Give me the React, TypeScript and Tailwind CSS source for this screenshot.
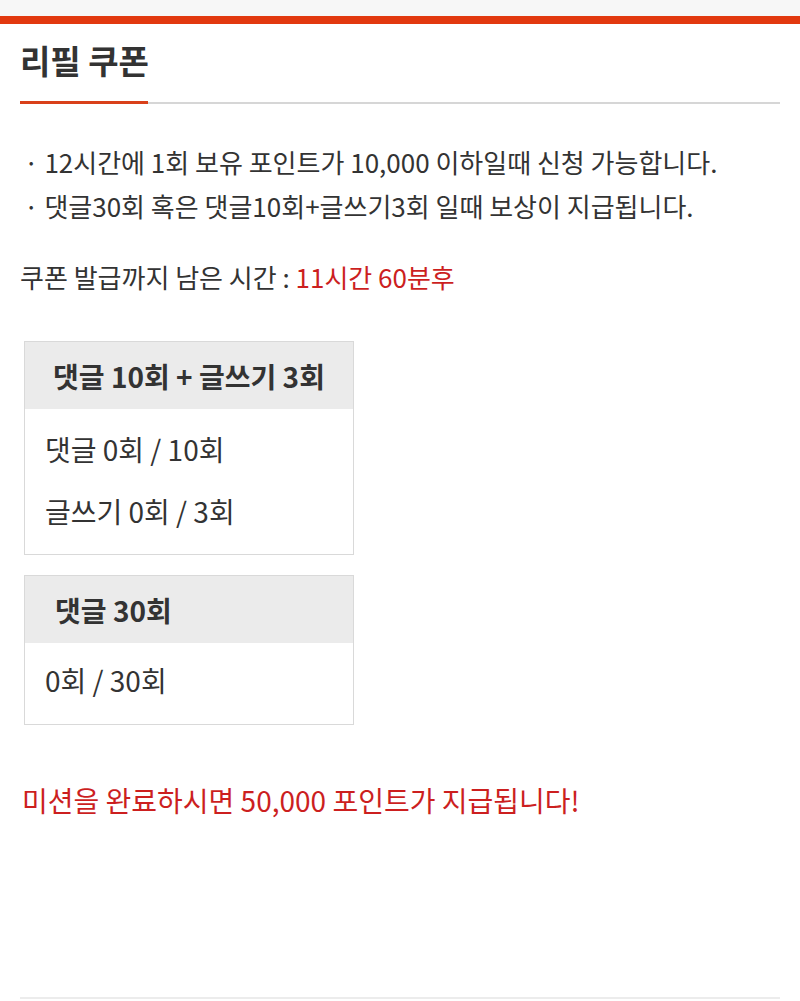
import React from "react";

export default function App() {
  return (
    <div
      className="min-h-[1001px] w-[800px] bg-white text-[#333]"
      style={{ fontFamily: '"Noto Sans CJK KR", "Noto Sans", sans-serif' }}
    >
      <div className="h-[16px] bg-[#f7f7f7]" />
      <div className="h-[8px] bg-[#e2390f]" />
      <div className="px-[20px]">
        <h1 className="pt-[14px] text-[33px] font-bold leading-[44px] text-[#333]">
          리필 쿠폰
        </h1>
        <div className="mt-[19px] flex items-end">
          <div className="h-[3px] w-[128px] bg-[#d9401a]" />
          <div className="h-[2px] flex-1 bg-[#d6d6d6]" />
        </div>
        <div className="mt-[36px] pl-[4px] text-[26px] leading-[44px] text-[#333]">
          <p>· 12시간에 1회 보유 포인트가 10,000 이하일때 신청 가능합니다.</p>
          <p>· 댓글30회 혹은 댓글10회+글쓰기3회 일때 보상이 지급됩니다.</p>
        </div>
        <p className="mt-[27px] text-[26px] leading-[44px]">
          쿠폰 발급까지 남은 시간 : <span className="text-[#cc1f1f]">11시간 60분후</span>
        </p>
        <div className="mt-[42px] ml-[4px] flex w-[330px] flex-col gap-[20px]">
          <div className="border border-[#d9d9d9]">
            <div className="flex h-[67px] items-center justify-center bg-[#ebebeb] text-[28px] font-bold">
              댓글 10회 + 글쓰기 3회
            </div>
            <div className="px-[20px] pt-[9px] pb-[12px] text-[28px] leading-[62px]">
              <p>댓글 0회 / 10회</p>
              <p>글쓰기 0회 / 3회</p>
            </div>
          </div>
          <div className="border border-[#d9d9d9]">
            <div className="flex h-[67px] items-center bg-[#ebebeb] pl-[30px] text-[28px] font-bold">
              댓글 30회
            </div>
            <div className="px-[20px] pt-[6px] pb-[13px] text-[28px] leading-[62px]">
              <p>0회 / 30회</p>
            </div>
          </div>
        </div>
        <p className="mt-[53px] pl-[2px] text-[28px] leading-[44px] text-[#cc1f1f]">
          미션을 완료하시면 50,000 포인트가 지급됩니다!
        </p>
        <div className="mt-[175px] h-[2px] bg-[#ececec]" />
      </div>
    </div>
  );
}
